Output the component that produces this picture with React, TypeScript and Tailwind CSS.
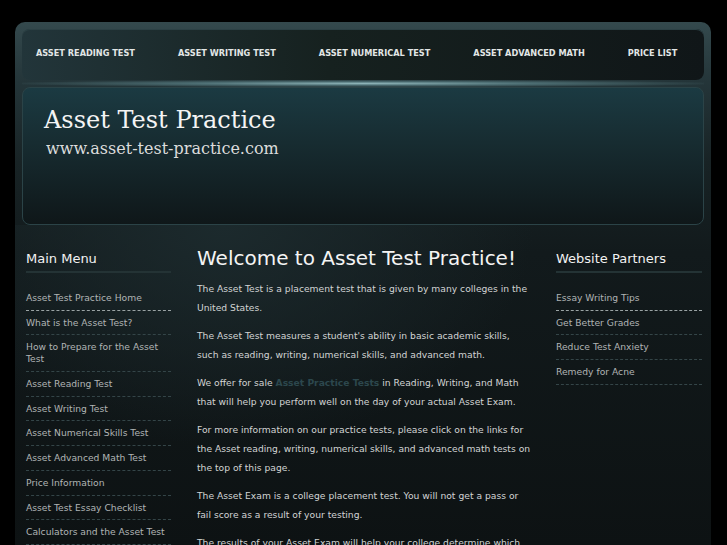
import React from 'react';

const navItems = [
  'Asset Reading Test',
  'Asset Writing Test',
  'Asset Numerical Test',
  'Asset Advanced Math',
  'Price List',
];

const mainMenu = [
  'Asset Test Practice Home',
  'What is the Asset Test?',
  'How to Prepare for the Asset Test',
  'Asset Reading Test',
  'Asset Writing Test',
  'Asset Numerical Skills Test',
  'Asset Advanced Math Test',
  'Price Information',
  'Asset Test Essay Checklist',
  'Calculators and the Asset Test',
];

const partners = ['Essay Writing Tips', 'Get Better Grades', 'Reduce Test Anxiety', 'Remedy for Acne'];

const sans = "font-['DejaVu_Sans',Verdana,sans-serif]";

function SideBox({ title, items }: { title: string; items: string[] }) {
  return (
    <div>
      <h2 className="text-[13px] leading-[16px] text-[#f2f2f2] pb-[4px] border-b-2 border-[#243335]">{title}</h2>
      <ul className="mt-[13px]">
        {items.map((item, i) => (
          <li
            key={item}
            className={`pt-[6px] pb-[5.7px] text-[9.2px] leading-[12px] text-[#b0b4b4] border-b border-dashed ${
              i === 0 ? 'border-[#9aa3a4]' : 'border-[#344548]'
            }`}
          >
            {item}
          </li>
        ))}
      </ul>
    </div>
  );
}

export default function App() {
  return (
    <div className={`min-h-screen bg-black pt-[22px] pl-[15px] ${sans}`}>
      <div className="w-[696px] h-[523px] overflow-hidden rounded-t-[10px] bg-[linear-gradient(180deg,#34494d_0px,#243539_60px,#182325_140px,#121a1c_230px,#0d1213_523px)]">
        <div className="px-[7px] pt-[7px]">
          {/* top nav */}
          <nav className="h-[51px] rounded-[8px] bg-[linear-gradient(90deg,#22353a_0%,#16211f_45%,#101618_100%)] shadow-[inset_0_1px_0_#2c4145] flex items-center pl-[14px] gap-[43px] pb-[2px]">
            {navItems.map((n) => (
              <a key={n} className="text-[8.2px] font-bold uppercase text-[#e2e6e6]">
                {n}
              </a>
            ))}
          </nav>
          <div className="h-[7px] bg-[radial-gradient(ellipse_at_center,#8db3b7_0%,#4c6d72_35%,transparent_75%)]" />
          {/* header */}
          <header className="h-[138px] rounded-[8px] border border-[#2b4347] bg-[linear-gradient(180deg,#1b3a42_0%,#172c31_40%,#0f1719_100%)] pl-[21px] pt-[18px]">
            <h1 className="font-['DejaVu_Serif',serif] text-[24px] leading-[28px] text-[#f4f4f4]">Asset Test Practice</h1>
            <p className="font-['DejaVu_Serif',serif] text-[16px] leading-[20px] text-[#dcdcdc] mt-[5px] ml-[2px]">
              www.asset-test-practice.com
            </p>
          </header>
        </div>

        {/* main area */}
        <div className="flex pl-[11px] pr-[9px] pt-[26px] bg-[radial-gradient(ellipse_at_30%_0%,#1c2a2d_0%,transparent_45%)]">
          <div className="w-[145px] shrink-0">
            <SideBox title="Main Menu" items={mainMenu} />
          </div>

          <div className="w-[334px] shrink-0 ml-[26px] -mt-[5px]">
            <h1 className="text-[20px] leading-[24px] text-[#f4f4f4] mb-[9px]">Welcome to Asset Test Practice!</h1>
            <div className="text-[9.2px] leading-[19px] text-[#d2d4d4] space-y-[9px]">
              <p>The Asset Test is a placement test that is given by many colleges in the United States.</p>
              <p>The Asset Test measures a student's ability in basic academic skills, such as reading, writing, numerical skills, and advanced math.</p>
              <p>
                We offer for sale <a className="font-bold text-[#2c474d]">Asset Practice Tests</a> in Reading, Writing, and Math that
                will help you perform well on the day of your actual Asset Exam.
              </p>
              <p>
                For more information on our practice tests, please click on the links for the Asset reading, writing, numerical skills,
                and advanced math tests on the top of this page.
              </p>
              <p>The Asset Exam is a college placement test. You will not get a pass or fail score as a result of your testing.</p>
              <p>The results of your Asset Exam will help your college determine which courses you should take.</p>
            </div>
          </div>

          <div className="w-[146px] shrink-0 ml-[25px]">
            <SideBox title="Website Partners" items={partners} />
          </div>
        </div>
      </div>
    </div>
  );
}
